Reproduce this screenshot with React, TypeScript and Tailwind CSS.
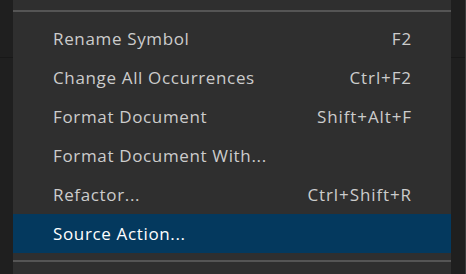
const items = [
  { label: "Rename Symbol", key: "F2" },
  { label: "Change All Occurrences", key: "Ctrl+F2" },
  { label: "Format Document", key: "Shift+Alt+F" },
  { label: "Format Document With...", key: "" },
  { label: "Refactor...", key: "Ctrl+Shift+R" },
  { label: "Source Action...", key: "", active: true },
];

function Strip({ edge }: { edge?: boolean }) {
  return (
    <div className={`flex flex-col bg-[#1f1f1f] ${edge ? "w-[15px] border-r border-[#3c3c3c]" : "w-[13px]"}`}>
      <div className="h-[58px] shrink-0 border-b border-[#181818]" />
      <div className="flex-1" />
    </div>
  );
}

export default function App() {
  return (
    <div
      className="flex h-[274px] w-[466px] overflow-hidden bg-[#1f1f1f] text-[#cccccc]"
      style={{ fontFamily: '"Open Sans", "Noto Sans", sans-serif' }}
    >
      <Strip />
      <div className="flex flex-1 flex-col bg-[#2f2f2f] pt-[10px]">
        <div className="h-[2px] bg-[#555555]" />
        <div className="flex flex-col py-[7px]">
          {items.map((it) => (
            <div
              key={it.label}
              className={`flex h-[39px] items-center justify-between pl-[40px] pr-[39px] text-[17px] tracking-[0.65px] ${
                it.active ? "bg-[#04395e] text-white" : ""
              }`}
            >
              <span>{it.label}</span>
              <span className="tracking-[0.9px]">{it.key}</span>
            </div>
          ))}
        </div>
        <div className="h-[2px] bg-[#555555]" />
      </div>
      <Strip edge />
    </div>
  );
}
